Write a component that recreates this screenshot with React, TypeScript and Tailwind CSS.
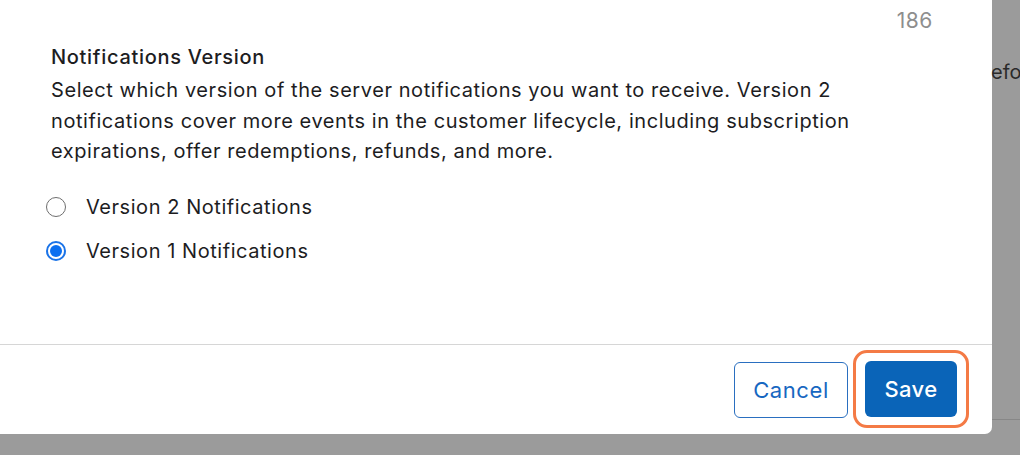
import React from "react";

export default function App() {
  return (
    <div
      className="w-[1020px] h-[455px] bg-[#9b9b9b] flex overflow-hidden"
      style={{ fontFamily: "Inter, 'Noto Sans', sans-serif" }}
    >
      <div className="w-[992px] h-[434px] bg-white rounded-br-[7px] flex flex-col shrink-0">
        <div className="flex justify-end pr-[59px] pt-[9px] h-[40px]">
          <span className="text-[21px] text-[#8e8e8e] leading-[24px] tracking-[0.6px]">186</span>
        </div>
        <div className="pl-[51px] pr-[40px]">
          <div className="text-[20px] text-[#1d1d1f] leading-[30px] font-medium tracking-[0.7px] mt-[2px]">
            Notifications Version
          </div>
          <p className="text-[20px] text-[#1d1d1f] leading-[30.5px] w-[860px] tracking-[0.57px] mt-[3px]">
            Select which version of the server notifications you want to receive. Version 2
            <br />
            notifications cover more events in the customer lifecycle, including subscription
            <br />
            expirations, offer redemptions, refunds, and more.
          </p>
          <div className="flex flex-col gap-[17px] mt-[27px] ml-[-5px]">
            <label className="flex items-center gap-[20px] h-[27px]">
              <span className="w-[20px] h-[20px] rounded-full border-[1.5px] border-[#6e6e6e] bg-white" />
              <span className="text-[20px] text-[#1d1d1f] tracking-[0.55px]">Version 2 Notifications</span>
            </label>
            <label className="flex items-center gap-[20px] h-[27px]">
              <span className="w-[20px] h-[20px] rounded-full border-[2px] border-[#1a73e8] bg-white flex items-center justify-center">
                <span className="w-[12px] h-[12px] rounded-full bg-[#0b6ff0]" />
              </span>
              <span className="text-[20px] text-[#1d1d1f] tracking-[0.55px]">Version 1 Notifications</span>
            </label>
          </div>
        </div>
        <div className="mt-auto border-t border-[#d6d6d6] h-[90px] flex items-start justify-end pr-[23px] pt-[5px] gap-[5px]">
          <button className="mt-[12px] w-[114px] h-[56px] rounded-[6px] border border-[#2a6fc0] text-[#1767c1] text-[22px] tracking-[0.6px] bg-white">
            Cancel
          </button>
          <div className="px-[9px] py-[8px] rounded-[14px] border-[3px] border-[#f47a45]">
            <button className="block w-[92px] h-[56px] rounded-[6px] bg-[#0a64b8] text-white text-[22px] font-medium tracking-[0.4px]">
              Save
            </button>
          </div>
        </div>
      </div>
      <div className="flex-1 flex flex-col">
        <div className="mt-[58px] text-[20px] text-[#2a2a2a] leading-[28px] -ml-[1px]">efo</div>
        <div className="mt-auto mb-[35px] border-b border-[#878787]" />
      </div>
    </div>
  );
}
